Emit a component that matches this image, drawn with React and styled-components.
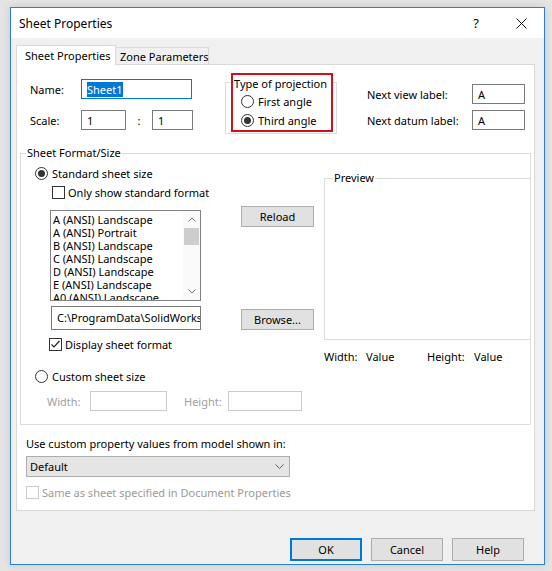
import styled, { createGlobalStyle } from "styled-components"

const GlobalStyle = createGlobalStyle`
    body {
        margin: 0;
        background: #e4e4e4;
        font-family: "Noto Sans", "Open Sans", sans-serif;
        font-size: 11px;
        color: #000;
    }
`

const sheetSizes = [
    "A (ANSI) Landscape",
    "A (ANSI) Portrait",
    "B (ANSI) Landscape",
    "C (ANSI) Landscape",
    "D (ANSI) Landscape",
    "E (ANSI) Landscape",
    "A0 (ANSI) Landscape",
]

const Chevron = ({ up, size = 9 }) => (
    <svg width={size} height={size / 2 + 1} viewBox="0 0 9 5.5">
        <polyline
            points={up ? "0.5,5 4.5,1 8.5,5" : "0.5,0.5 4.5,4.5 8.5,0.5"}
            fill="none"
            stroke="#606060"
            strokeWidth="1"
        />
    </svg>
)

const Radio = ({ checked, children, disabled }) => (
    <RadioRow $disabled={disabled}>
        <RadioCircle $checked={checked} />
        {children}
    </RadioRow>
)

const Checkbox = ({ checked, children, disabled }) => (
    <CheckRow $disabled={disabled}>
        <CheckBox $disabled={disabled}>
            {checked && (
                <svg width="11" height="11" viewBox="0 0 11 11">
                    <polyline points="1.5,5.5 4,8 9.5,2" fill="none" stroke="#222" strokeWidth="1.2" />
                </svg>
            )}
        </CheckBox>
        {children}
    </CheckRow>
)

const App = () => {
    return (
        <Screen>
            <GlobalStyle />
            <Dialog>
                <TitleBar>
                    <Title>Sheet Properties</Title>
                    <TitleButtons>
                        <HelpGlyph>?</HelpGlyph>
                        <svg width="11" height="11" viewBox="0 0 11 11">
                            <path d="M0.5 0.5 L10.5 10.5 M10.5 0.5 L0.5 10.5" stroke="#111" strokeWidth="1" />
                        </svg>
                    </TitleButtons>
                </TitleBar>

                <Body>
                    <TabStrip>
                        <Tab $active>Sheet Properties</Tab>
                        <Tab>Zone Parameters</Tab>
                    </TabStrip>

                    <Panel>
                        <TopSection>
                            <FieldColumn>
                                <FieldRow>
                                    <Label $w={51}>Name:</Label>
                                    <TextBox $w={111} $focused>
                                        <Selected>Sheet1</Selected>
                                    </TextBox>
                                </FieldRow>
                                <FieldRow>
                                    <Label $w={51}>Scale:</Label>
                                    <TextBox $w={45}>1</TextBox>
                                    <Colon>:</Colon>
                                    <TextBox $w={41}>1</TextBox>
                                </FieldRow>
                            </FieldColumn>

                            <ProjectionArea>
                                <ProjectionBox>
                                    <ProjectionLegend>Type of projection</ProjectionLegend>
                                    <ProjectionOptions>
                                        <Radio>First angle</Radio>
                                        <Radio checked>Third angle</Radio>
                                    </ProjectionOptions>
                                </ProjectionBox>
                            </ProjectionArea>

                            <LabelColumn>
                                <FieldRow>
                                    <Label $w={105}>Next view label:</Label>
                                    <TextBox $w={53}>A</TextBox>
                                </FieldRow>
                                <FieldRow>
                                    <Label $w={105}>Next datum label:</Label>
                                    <TextBox $w={53}>A</TextBox>
                                </FieldRow>
                            </LabelColumn>
                        </TopSection>

                        <GroupBox>
                            <GroupLegend>Sheet Format/Size</GroupLegend>
                            <GroupBody>
                                <FormatColumn>
                                    <Radio checked>Standard sheet size</Radio>
                                    <Indent $x={17}>
                                        <Checkbox>Only show standard format</Checkbox>
                                    </Indent>
                                    <ListRow>
                                        <ListBox>
                                            <ListItems>
                                                {sheetSizes.map((s) => (
                                                    <ListItem key={s}>{s}</ListItem>
                                                ))}
                                            </ListItems>
                                            <ScrollBar>
                                                <ScrollArrow>
                                                    <Chevron up size={8} />
                                                </ScrollArrow>
                                                <ScrollThumb />
                                                <ScrollTrack />
                                                <ScrollArrow>
                                                    <Chevron size={8} />
                                                </ScrollArrow>
                                            </ScrollBar>
                                        </ListBox>
                                        <Button>Reload</Button>
                                    </ListRow>
                                    <PathRow>
                                        <PathBox>C:\ProgramData\SolidWorks</PathBox>
                                        <Button>Browse...</Button>
                                    </PathRow>
                                    <Indent $x={14} $top={5}>
                                        <Checkbox checked>Display sheet format</Checkbox>
                                    </Indent>
                                </FormatColumn>

                                <PreviewColumn>
                                    <PreviewBox>
                                        <GroupLegend $inset={8}>Preview</GroupLegend>
                                    </PreviewBox>
                                    <SizeValues>
                                        <SizeLabel $w={42}>Width:</SizeLabel>
                                        <SizeLabel $w={61}>Value</SizeLabel>
                                        <SizeLabel $w={47}>Height:</SizeLabel>
                                        <SizeLabel>Value</SizeLabel>
                                    </SizeValues>
                                </PreviewColumn>
                            </GroupBody>

                            <CustomSection>
                                <Radio>Custom sheet size</Radio>
                                <CustomSizeRow>
                                    <DimLabel $w={43}>Width:</DimLabel>
                                    <DisabledBox $w={77} />
                                    <DimLabel $w={44} $gap={17}>Height:</DimLabel>
                                    <DisabledBox $w={74} />
                                </CustomSizeRow>
                            </CustomSection>
                        </GroupBox>

                        <BottomSection>
                            <Caption>Use custom property values from model shown in:</Caption>
                            <Select>
                                <span>Default</span>
                                <Chevron />
                            </Select>
                            <Checkbox disabled>Same as sheet specified in Document Properties</Checkbox>
                        </BottomSection>
                    </Panel>

                    <Footer>
                        <DialogButton $primary>OK</DialogButton>
                        <DialogButton>Cancel</DialogButton>
                        <DialogButton>Help</DialogButton>
                    </Footer>
                </Body>
            </Dialog>
        </Screen>
    )
}

const Screen = styled.div`
    width: 552px;
    height: 571px;
    padding: 7px 0 0 10px;
    box-sizing: border-box;
    overflow: hidden;
`

const Dialog = styled.div`
    width: 535px;
    height: 558px;
    box-sizing: border-box;
    border: 1px solid #2a7fd4;
    background: #f0f0f0;
    display: flex;
    flex-direction: column;
    box-shadow: 0 0 8px rgba(0, 0, 0, 0.12);
`

const TitleBar = styled.div`
    height: 30px;
    flex-shrink: 0;
    background: #fff;
    display: flex;
    align-items: center;
    justify-content: space-between;
    padding: 0 17px 0 8px;
`

const Title = styled.span`
    font-size: 12px;
`

const TitleButtons = styled.div`
    display: flex;
    align-items: center;
    gap: 37px;
`

const HelpGlyph = styled.span`
    font-size: 13px;
    line-height: 1;
`

const Body = styled.div`
    flex: 1;
    padding: 7px 9px 0 5px;
`

const TabStrip = styled.div`
    display: flex;
    align-items: flex-end;
    height: 19px;
`

const Tab = styled.div`
    height: ${(p) => (p.$active ? "20px" : "17px")};
    width: ${(p) => (p.$active ? "100px" : "93px")};
    box-sizing: border-box;
    padding-left: ${(p) => (p.$active ? "8px" : "4px")};
    display: flex;
    align-items: center;
    white-space: nowrap;
    border: 1px solid #d9d9d9;
    border-bottom: none;
    border-left: ${(p) => (p.$active ? "1px solid #d9d9d9" : "none")};
    background: ${(p) => (p.$active ? "#fff" : "#f0f0f0")};
    margin-bottom: ${(p) => (p.$active ? "-1px" : "0")};
    position: relative;
    z-index: 1;
`

const Panel = styled.div`
    height: 447px;
    box-sizing: border-box;
    background: #fff;
    border: 1px solid #d9d9d9;
    padding: 0 3px;
`

const TopSection = styled.div`
    display: flex;
    align-items: flex-start;
    padding: 8px 0 0 10px;
`

const FieldColumn = styled.div`
    display: flex;
    flex-direction: column;
    gap: 11px;
    margin-top: 6px;
`

const LabelColumn = styled.div`
    display: flex;
    flex-direction: column;
    gap: 6px;
    margin: 11px 0 0 34px;
`

const FieldRow = styled.div`
    display: flex;
    align-items: center;
    height: 20px;
`

const Label = styled.span`
    width: ${(p) => p.$w}px;
    flex-shrink: 0;
`

const TextBox = styled.div`
    width: ${(p) => p.$w}px;
    height: 20px;
    box-sizing: border-box;
    border: 1px solid ${(p) => (p.$focused ? "#0078d7" : "#7a7a7a")};
    padding: 0 5px;
    display: flex;
    align-items: center;
    background: #fff;
`

const Selected = styled.span`
    background: #0078d7;
    color: #fff;
    line-height: 15px;
`

const Colon = styled.span`
    width: 26px;
    text-align: center;
`

const ProjectionArea = styled.div`
    position: relative;
    z-index: 0;
    margin-left: 38px;

    &::before {
        content: "";
        position: absolute;
        left: -6px;
        top: 9px;
        right: -4px;
        bottom: -2px;
        border: 1px solid #dcdcdc;
        z-index: -1;
    }
`

const ProjectionBox = styled.div`
    width: 102px;
    height: 59px;
    box-sizing: border-box;
    border: 2px solid #d0121b;
    background: #fff;
    padding-left: 1px;
`

const ProjectionLegend = styled.div`
    height: 17px;
    line-height: 17px;
    white-space: nowrap;
`

const ProjectionOptions = styled.div`
    padding-left: 7px;
`

const RadioRow = styled.div`
    display: flex;
    align-items: center;
    gap: 4px;
    height: 19px;
    white-space: nowrap;
    color: ${(p) => (p.$disabled ? "#a0a0a0" : "#000")};
`

const RadioCircle = styled.span`
    width: 13px;
    height: 13px;
    box-sizing: border-box;
    border-radius: 50%;
    border: 1px solid #333;
    background: #fff;
    display: flex;
    align-items: center;
    justify-content: center;
    flex-shrink: 0;

    &::after {
        content: "";
        width: 7px;
        height: 7px;
        border-radius: 50%;
        background: #333;
        display: ${(p) => (p.$checked ? "block" : "none")};
    }
`

const CheckRow = styled.div`
    display: flex;
    align-items: center;
    gap: 3px;
    height: 19px;
    white-space: nowrap;
    color: ${(p) => (p.$disabled ? "#9a9a9a" : "#000")};
`

const CheckBox = styled.span`
    width: 13px;
    height: 13px;
    box-sizing: border-box;
    border: 1px solid ${(p) => (p.$disabled ? "#cccccc" : "#333")};
    background: #fff;
    display: flex;
    align-items: center;
    justify-content: center;
    flex-shrink: 0;
`

const GroupBox = styled.div`
    margin-top: 21px;
    border: 1px solid #dcdcdc;
    padding: 0 0 13px 0;
`

const GroupLegend = styled.div`
    display: block;
    width: fit-content;
    margin: -9px 0 0 ${(p) => p.$inset ?? 5}px;
    padding: 0 1px;
    line-height: 16px;
    background: #fff;
`

const GroupBody = styled.div`
    display: flex;
    align-items: flex-start;
    margin-top: 3px;
`

const FormatColumn = styled.div`
    display: flex;
    flex-direction: column;
    align-items: flex-start;
    padding-left: 14px;
    width: 279px;
`

const Indent = styled.div`
    padding-left: ${(p) => p.$x}px;
    margin-top: ${(p) => p.$top ?? 0}px;
`

const ListRow = styled.div`
    display: flex;
    align-items: flex-start;
    gap: 40px;
    margin: 4px 0 0 15px;
`

const ListBox = styled.div`
    width: 151px;
    height: 91px;
    margin-top: 4px;
    box-sizing: border-box;
    border: 1px solid #828282;
    display: flex;
    overflow: hidden;
`

const ListItems = styled.div`
    flex: 1;
    padding: 2px 0 0 2px;
    overflow: hidden;
`

const ListItem = styled.div`
    line-height: 13px;
    white-space: nowrap;
`

const ScrollBar = styled.div`
    width: 17px;
    display: flex;
    flex-direction: column;
    align-items: center;
    background: #fafafa;
`

const ScrollArrow = styled.div`
    height: 17px;
    display: flex;
    align-items: center;
    justify-content: center;
`

const ScrollThumb = styled.div`
    width: 15px;
    height: 17px;
    background: #cdcdcd;
`

const ScrollTrack = styled.div`
    flex: 1;
`

const Button = styled.div`
    width: 73px;
    height: 21px;
    box-sizing: border-box;
    background: #e1e1e1;
    border: 1px solid #adadad;
    display: flex;
    align-items: center;
    justify-content: center;
    flex-shrink: 0;
`

const PathRow = styled.div`
    display: flex;
    align-items: flex-start;
    gap: 40px;
    margin: 5px 0 0 16px;

    & > ${Button} {
        margin-top: 3px;
    }
`

const PathBox = styled.div`
    width: 150px;
    height: 24px;
    box-sizing: border-box;
    border: 1px solid #7a7a7a;
    padding: 0 5px;
    line-height: 22px;
    white-space: nowrap;
    overflow: hidden;
`

const PreviewColumn = styled.div`
    flex: 1;
    margin-left: 10px;
    margin-top: 14px;
`

const PreviewBox = styled.div`
    height: 162px;
    box-sizing: border-box;
    border: 1px solid #dcdcdc;
    border-right: none;
`

const SizeValues = styled.div`
    display: flex;
    margin-top: 9px;
    line-height: 16px;
`

const SizeLabel = styled.span`
    width: ${(p) => (p.$w ? `${p.$w}px` : "auto")};
`

const CustomSection = styled.div`
    padding-left: 14px;
    margin-top: 2px;
`

const CustomSizeRow = styled.div`
    display: flex;
    align-items: center;
    height: 20px;
    margin: 5px 0 0 12px;
`

const DimLabel = styled.span`
    width: ${(p) => p.$w}px;
    margin-left: ${(p) => p.$gap ?? 0}px;
    color: #a0a0a0;
`

const DisabledBox = styled.div`
    width: ${(p) => p.$w}px;
    height: 20px;
    box-sizing: border-box;
    border: 1px solid #cccccc;
`

const BottomSection = styled.div`
    padding: 11px 0 0 6px;
    display: flex;
    flex-direction: column;
    align-items: flex-start;
`

const Caption = styled.div`
    line-height: 16px;
`

const Select = styled.div`
    width: 264px;
    height: 21px;
    box-sizing: border-box;
    margin: 4px 0 6px;
    background: #e5e5e5;
    border: 1px solid #adadad;
    display: flex;
    align-items: center;
    justify-content: space-between;
    padding: 0 5px 0 3px;
`

const Footer = styled.div`
    display: flex;
    justify-content: flex-end;
    gap: 9px;
    margin-top: 27px;
    padding-right: 11px;
`

const DialogButton = styled.div`
    width: 72px;
    height: 23px;
    box-sizing: border-box;
    background: #e1e1e1;
    border: ${(p) => (p.$primary ? "2px solid #0078d7" : "1px solid #adadad")};
    display: flex;
    align-items: center;
    justify-content: center;
`

export default App
